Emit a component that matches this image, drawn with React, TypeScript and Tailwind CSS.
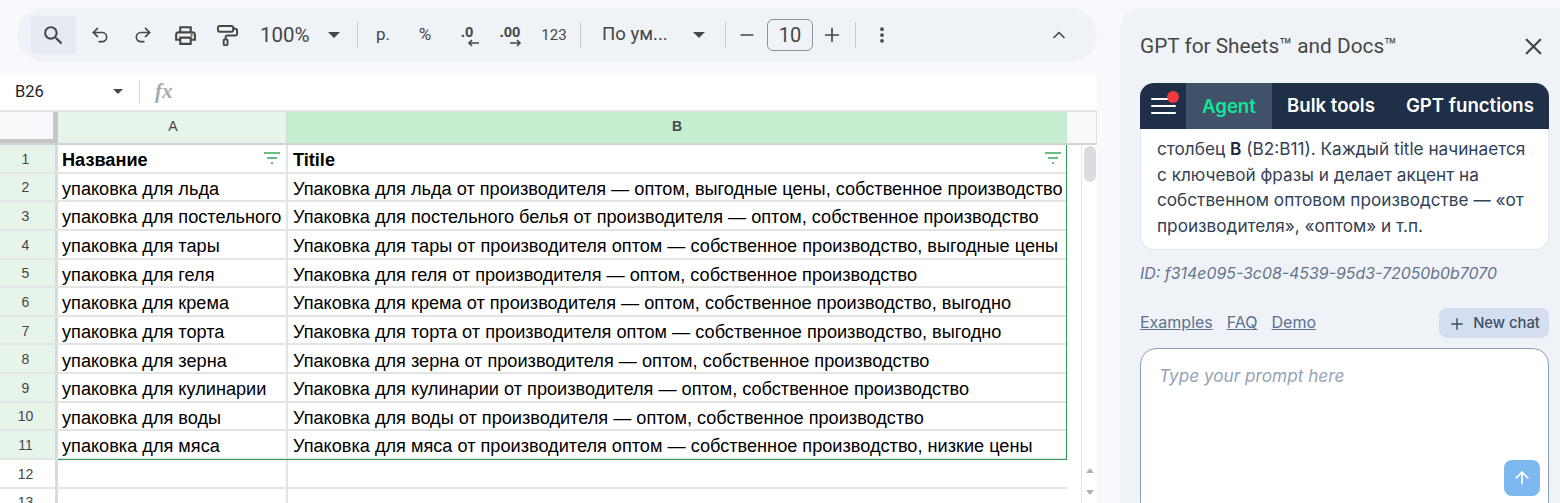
import { ArrowUp, ChevronUp, EllipsisVertical, Minus, PaintRoller, Plus, Redo2, Undo2, X } from "lucide-react";
import { MdOutlinePrint, MdSearch } from "react-icons/md";

const rows = [
  ["Название", "Titile"],
  ["упаковка для льда", "Упаковка для льда от производителя — оптом, выгодные цены, собственное производство"],
  ["упаковка для постельного", "Упаковка для постельного белья от производителя — оптом, собственное производство"],
  ["упаковка для тары", "Упаковка для тары от производителя оптом — собственное производство, выгодные цены"],
  ["упаковка для геля", "Упаковка для геля от производителя — оптом, собственное производство"],
  ["упаковка для крема", "Упаковка для крема от производителя — оптом, собственное производство, выгодно"],
  ["упаковка для торта", "Упаковка для торта от производителя оптом — собственное производство, выгодно"],
  ["упаковка для зерна", "Упаковка для зерна от производителя — оптом, собственное производство"],
  ["упаковка для кулинарии", "Упаковка для кулинарии от производителя — оптом, собственное производство"],
  ["упаковка для воды", "Упаковка для воды от производителя — оптом, собственное производство"],
  ["упаковка для мяса", "Упаковка для мяса от производителя оптом — собственное производство, низкие цены"],
  ["", ""],
  ["", ""],
];

function Caret({ className }: { className: string }) {
  return (
    <svg width="12" height="6" viewBox="0 0 12 6" className={className}>
      <path d="M0 0h12L6 6z" fill="#444746" />
    </svg>
  );
}

function Sep() {
  return <div className="h-[26px] w-px shrink-0 bg-[#c7c9cc]" />;
}

function FilterIcon() {
  return (
    <svg width="16" height="12" viewBox="0 0 16 12" className="shrink-0">
      <path d="M0 1h16M3 6h10M7 11h2" stroke="#34a853" strokeWidth="1.5" fill="none" />
    </svg>
  );
}

function DecimalIcon({ label, back, className }: { label: string; back?: boolean; className: string }) {
  return (
    <div className={`flex shrink-0 flex-col items-center text-[15px] font-bold leading-[15px] text-[#444746] ${className}`}>
      <span className="h-[15px] font-['Liberation_Sans',sans-serif]">{label}</span>
      <svg width="12" height="8" viewBox="0 0 12 8" className={back ? "ml-3" : "ml-3 rotate-180"}>
        <path d="M12 4H2M5 1 2 4l3 3" stroke="#444746" strokeWidth="1.6" fill="none" />
      </svg>
    </div>
  );
}

function Toolbar() {
  return (
    <div className="flex h-[54px] w-[1080px] items-center rounded-[27px] bg-[#eff3f8] pl-[13px] text-[#444746]">
      <div className="flex h-[38px] w-[46px] shrink-0 items-center justify-center rounded-l-md bg-[#e6ebf3]">
        <MdSearch size={25} />
      </div>
      <div className="flex w-[48px] shrink-0 justify-center"><Undo2 size={20} strokeWidth={2} /></div>
      <div className="flex w-[38px] shrink-0 justify-center"><Redo2 size={20} strokeWidth={2} /></div>
      <div className="flex w-[46px] shrink-0 justify-center"><MdOutlinePrint size={25} /></div>
      <div className="flex w-[38px] shrink-0 justify-center"><PaintRoller size={23} strokeWidth={2} /></div>
      <span className="ml-[14px] w-[50px] shrink-0 text-[20.5px]">100%</span>
      <Caret className="ml-[18px] shrink-0" />
      <div className="ml-[17px]"><Sep /></div>
      <span className="w-[50px] shrink-0 text-center text-[17px]">р.</span>
      <span className="w-[34px] shrink-0 text-center text-[17px]">%</span>
      <DecimalIcon label=".0" back className="w-[50px]" />
      <DecimalIcon label=".00" className="w-[36px]" />
      <span className="w-[52px] shrink-0 text-center text-[15px]">123</span>
      <Sep />
      <span className="ml-[21px] w-[91px] shrink-0 text-[18.6px]">По ум...</span>
      <Caret className="shrink-0" />
      <div className="ml-[20px]"><Sep /></div>
      <div className="flex w-[41px] shrink-0 justify-center"><Minus size={20} strokeWidth={2} /></div>
      <div className="flex h-[32px] w-[46px] shrink-0 items-center justify-center rounded-md border border-[#8f9296] text-[20px]">10</div>
      <div className="flex w-[38px] shrink-0 justify-center"><Plus size={22} strokeWidth={1.8} /></div>
      <div className="ml-[4px]"><Sep /></div>
      <div className="ml-[16px] flex w-[20px] shrink-0 justify-center"><EllipsisVertical size={20} strokeWidth={2.5} /></div>
      <div className="ml-[157px] flex w-[20px] shrink-0 justify-center"><ChevronUp size={24} strokeWidth={2} /></div>
    </div>
  );
}

function FormulaBar() {
  return (
    <div className="mt-[11px] flex h-[39px] items-center border-b-2 border-[#e0e2e4] bg-white text-[#444746]">
      <span className="ml-[15px] w-[98px] pt-[1px] text-[16.5px] text-[#1f1f1f]">B26</span>
      <Caret className="h-[5px] w-[10px]" />
      <div className="ml-[16px] h-[24px] w-px bg-[#dadce0]" />
      <span className="ml-[15px] font-['Liberation_Serif',serif] text-[21px] font-bold italic text-[#a8abad]">fx</span>
    </div>
  );
}

function Sheet() {
  return (
    <div className="relative h-[391px] bg-white font-['Liberation_Sans',sans-serif] text-[18.15px] text-black">
      {/* column headers */}
      <div className="flex h-[33px] border-b-2 border-[#d0d2d4] text-[14px] text-[#444746]">
        <div className="w-[58px] shrink-0 border-r-[5px] border-b-[4px] border-[#c4c6c8] bg-[#f8f9fa]" />
        <div className="flex w-[229px] shrink-0 items-center justify-center border-r border-[#d5d8d6] bg-[#e6f4ea] pb-[2px] pl-[2px]">A</div>
        <div className="flex w-[780px] shrink-0 items-center justify-center bg-[#c4eecf] pb-[2px] font-bold">B</div>
        <div className="flex-1 border-r border-[#e0e2e4] bg-[#f8f9fa]" />
      </div>

      {rows.map((row, i) => (
        <div key={i} className="flex h-[28.64px] w-[1067px] border-b-2 border-[#e3e4e4]">
          <div
            className={`flex w-[58px] shrink-0 items-center justify-center border-r-[3px] border-[#d8dadc] pr-[4px] pt-[2px] text-[14px] text-[#444746] ${i < 11 ? "bg-[#e6f4ea]" : "bg-white"}`}
          >
            {i + 1}
          </div>
          <div className={`flex w-[230px] shrink-0 items-center border-r-2 border-[#e3e4e4] pl-[4px] pt-[5px] ${i === 0 ? "font-bold" : ""}`}>
            <span className="flex-1 whitespace-nowrap">{row[0]}</span>
            {i === 0 && <span className="mr-[6px] mb-[5px] block"><FilterIcon /></span>}
          </div>
          <div className={`flex flex-1 items-center pl-[5px] pt-[5px] ${i === 0 ? "font-bold" : ""}`}>
            <span className="flex-1 whitespace-nowrap">{row[1]}</span>
            {i === 0 && <span className="mr-[6px] mb-[5px] block"><FilterIcon /></span>}
          </div>
        </div>
      ))}

      {/* selection outline */}
      <div className="absolute left-[58px] top-[33px] h-[315px] w-[1009px] border-r border-b border-[#2e9b55]" />

      {/* scrollbar */}
      <div className="absolute right-0 top-[33px] h-[358px] w-[16px] border-l border-[#e4e5e6] bg-white">
        <div className="mx-auto mt-[1px] h-[36px] w-[12px] rounded-md bg-[#dadce0]" />
        <div className="absolute bottom-[30px] left-[4px] h-0 w-0 border-x-[4px] border-b-[5px] border-x-transparent border-b-[#b0b3b6]" />
        <div className="absolute bottom-[8px] left-[4px] h-0 w-0 border-x-[4px] border-t-[5px] border-x-transparent border-t-[#b0b3b6]" />
      </div>
    </div>
  );
}

function Panel() {
  return (
    <div className="ml-[23px] mt-[8px] h-[495px] w-[440px] shrink-0 rounded-tl-[20px] bg-[#eff3f8] pl-[20px] pr-[11px] font-['Inter',sans-serif]">
      <div className="flex h-[75px] items-center justify-between">
        <span className="mt-[2px] font-['Roboto',sans-serif] text-[20.8px] text-[#444746]">GPT for Sheets™ and Docs™</span>
        <X size={27} strokeWidth={2} className="mr-[2px] mt-[1px] text-[#444746]" />
      </div>

      <div className="flex h-[46px] items-stretch overflow-hidden rounded-t-[14px] bg-[#1e2f47] text-[18.6px] font-semibold text-white">
        <div className="relative flex w-[46px] flex-col items-center justify-center gap-[5px]">
          <span className="h-[2px] w-[25px] rounded bg-white" />
          <span className="h-[2px] w-[25px] rounded bg-white" />
          <span className="h-[2px] w-[25px] rounded bg-white" />
          <span className="absolute left-[27px] top-[8px] h-[12px] w-[12px] rounded-full bg-[#f03a3e]" />
        </div>
        <div className="flex w-[86px] items-center bg-[#3f5269] pl-[16px] pt-[1px] text-[#13e796]">Agent</div>
        <div className="ml-[15px] flex items-center">Bulk tools</div>
        <div className="ml-[31px] flex items-center">GPT functions</div>
      </div>
      <div className="h-[121px] rounded-b-[14px] border border-t-0 border-[#dde6f3] bg-white px-[16px] pt-[7px] text-[17.2px] leading-[25.7px] text-[#334155]">
        столбец <b className="font-semibold text-[#1e293b]">B</b> (B2:B11). Каждый title начинается
        <br />с ключевой фразы и делает акцент на
        <br />собственном оптовом производстве — «от
        <br />производителя», «оптом» и т.п.
      </div>

      <div className="mt-[12px] text-[15.9px] italic leading-[24px] text-[#64748b]">ID: f314e095-3c08-4539-95d3-72050b0b7070</div>

      <div className="mt-[22px] flex h-[30px] items-center justify-between">
        <div className="mb-[2px] flex gap-[14px] text-[16px] text-[#5b7190] underline">
          <span>Examples</span>
          <span>FAQ</span>
          <span>Demo</span>
        </div>
        <div className="flex h-[30px] w-[110px] items-center justify-center gap-[7px] rounded-lg bg-[#d3dff0] pt-[1px] text-[14.8px] font-medium text-[#3f4f66]">
          <Plus size={18} strokeWidth={2} />
          New chat
        </div>
      </div>

      <div className="relative mt-[10px] h-[170px] rounded-[16px] border border-[#8aa0bb] bg-white pl-[18px] pt-[15px] text-[17.2px] italic leading-[24px] text-[#94a3b8]">
        Type your prompt here
        <div className="absolute left-[363px] top-[111px] flex h-[36px] w-[36px] items-center justify-center rounded-lg bg-[#7db8f0] text-white">
          <ArrowUp size={20} strokeWidth={2} />
        </div>
      </div>
    </div>
  );
}

export default function App() {
  return (
    <div className="flex h-[503px] w-[1560px] overflow-hidden bg-[#f7f9fd] font-['Roboto',sans-serif]">
      <div className="w-[1097px] shrink-0 pt-[8px]">
        <div className="pl-[17px]">
          <Toolbar />
        </div>
        <FormulaBar />
        <Sheet />
      </div>
      <Panel />
    </div>
  );
}
